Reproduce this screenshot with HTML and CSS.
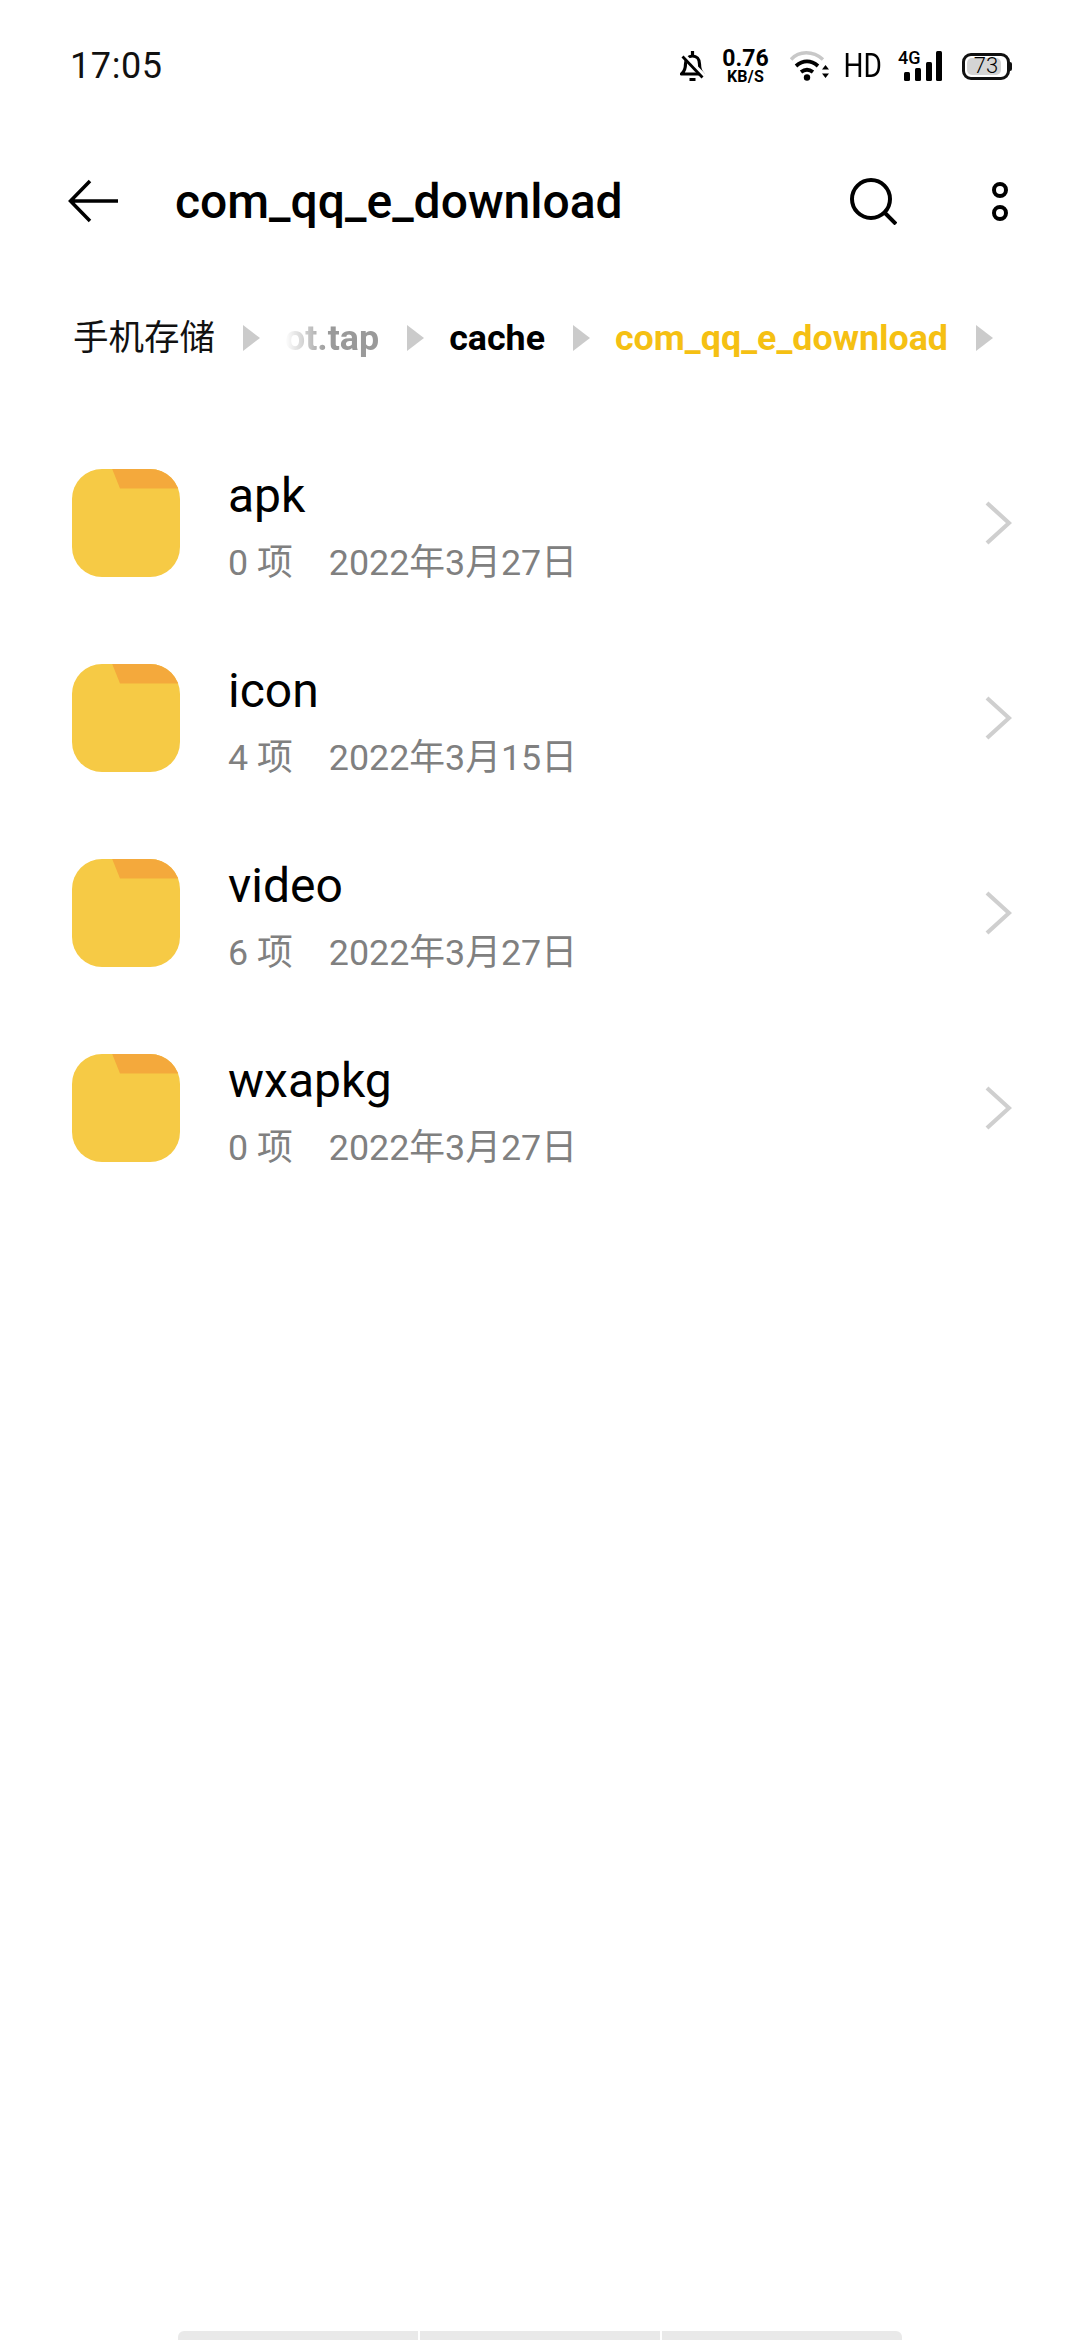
FILE: index.html
```html
<!DOCTYPE html>
<html lang="zh">
<head>
<meta charset="utf-8">
<title>com_qq_e_download</title>
<link rel="stylesheet" href="styles.css">
</head>
<body>
<div class="page">
  <header class="status">
    <span class="time">17:05</span>
    <div class="status-icons">
      <svg class="ic-bell" width="25" height="32" viewBox="0 0 25 32"><path d="M1.500 24h21.500C20 21 19.500 18 19.500 14c0-5-3-8-7-8s-7 3-7 8c0 4-.5 7-4 10z" fill="none" stroke="#000" stroke-width="3.200" stroke-linejoin="round"/><path d="M12.500 1v4M9.500 29.500h6" stroke="#000" stroke-width="3.200"/><path d="M3 5l21 21" stroke="#fff" stroke-width="5"/><path d="M2.500 6.500l20 21" stroke="#000" stroke-width="2.800"/></svg>
      <div class="speed"><span class="speed-num">0.76</span><span class="speed-unit">KB/S</span></div>
      <svg class="ic-wifi" width="40" height="30" viewBox="0 0 40 30"><path d="M1 8.500C9-.5 23-.5 33 8.500" fill="none" stroke="#c8c8c8" stroke-width="3.500"/><path d="M6 15c7-6 15-6 22 0M11 21c4-3 8-3 12 0" fill="none" stroke="#000" stroke-width="3.800"/><circle cx="17" cy="26.500" r="3.200" fill="#000"/><path d="M32 18.500l3.500-4.500 3.500 4.500zM32 22.500l3.500 4.500 3.500-4.500z" fill="#000"/></svg>
      <span class="hd"><span class="hd-text">HD</span></span>
      <div class="net">
        <span class="net-label">4G</span>
        <svg width="38" height="30" viewBox="0 0 38 30"><rect x="0" y="21" width="6" height="9" rx="1.500"/><rect x="11" y="17" width="6" height="13" rx="1.500"/><rect x="22" y="11" width="6" height="19" rx="1.500"/><rect x="32" y="0" width="6" height="30" rx="1.500"/></svg>
      </div>
      <div class="battery"><div class="battery-body"><span class="battery-fill"></span><span class="battery-num">73</span></div><span class="battery-cap"></span></div>
    </div>
  </header>

  <nav class="toolbar">
    <svg class="back" width="52" height="44" viewBox="0 0 52 44"><path d="M50 22H3M22 2L2.500 22 22 42" fill="none" stroke="#000" stroke-width="3.500"/></svg>
    <h1 class="title">com_qq_e_download</h1>
    <svg class="search" width="47" height="47" viewBox="0 0 47 47"><circle cx="21" cy="21" r="19" fill="none" stroke="#000" stroke-width="4"/><path d="M34 34l12 12" stroke="#000" stroke-width="4"/></svg>
    <svg class="more" width="16" height="39" viewBox="0 0 16 39"><circle cx="8" cy="8" r="6" fill="none" stroke="#000" stroke-width="4"/><circle cx="8" cy="31" r="6" fill="none" stroke="#000" stroke-width="4"/></svg>
  </nav>

  <div class="crumbs">
    <span class="crumb cjk">手机存储</span><span class="sep"></span>
    <span class="crumb faded">ot.tap</span><span class="sep"></span>
    <span class="crumb">cache</span><span class="sep"></span>
    <span class="crumb current">com_qq_e_download</span><span class="sep"></span>
  </div>

  <ul class="list">
    <li class="row">
      <span class="folder"><span class="tab"></span></span>
      <div class="info"><div class="name">apk</div><div class="meta"><span>0 项</span><span>2022年3月27日</span></div></div>
      <svg class="chev" width="28" height="46" viewBox="0 0 28 46"><path d="M3 3l22 20L3 43" fill="none" stroke="#cfcfcf" stroke-width="4.200"/></svg>
    </li>
    <li class="row">
      <span class="folder"><span class="tab"></span></span>
      <div class="info"><div class="name">icon</div><div class="meta"><span>4 项</span><span>2022年3月15日</span></div></div>
      <svg class="chev" width="28" height="46" viewBox="0 0 28 46"><path d="M3 3l22 20L3 43" fill="none" stroke="#cfcfcf" stroke-width="4.200"/></svg>
    </li>
    <li class="row">
      <span class="folder"><span class="tab"></span></span>
      <div class="info"><div class="name">video</div><div class="meta"><span>6 项</span><span>2022年3月27日</span></div></div>
      <svg class="chev" width="28" height="46" viewBox="0 0 28 46"><path d="M3 3l22 20L3 43" fill="none" stroke="#cfcfcf" stroke-width="4.200"/></svg>
    </li>
    <li class="row">
      <span class="folder"><span class="tab"></span></span>
      <div class="info"><div class="name">wxapkg</div><div class="meta"><span>0 项</span><span>2022年3月27日</span></div></div>
      <svg class="chev" width="28" height="46" viewBox="0 0 28 46"><path d="M3 3l22 20L3 43" fill="none" stroke="#cfcfcf" stroke-width="4.200"/></svg>
    </li>
  </ul>

  <div class="nav-hint"><span></span><span></span><span></span></div>
</div>
</body>
</html>
```
FILE: styles.css
```css
* { box-sizing: border-box; }
html, body { margin: 0; padding: 0; background: #fff; }
body { font-family: Roboto, "Noto Sans CJK SC", sans-serif; color: #000; }
.page { width: 1080px; height: 2340px; display: flex; flex-direction: column; overflow: hidden; background: #fff; }

.status { height: 130px; padding: 2px 68px 0 70px; display: flex; justify-content: space-between; align-items: center; }
.time { font-size: 36px; letter-spacing: .6px; color: #111; }
.status-icons { display: flex; align-items: center; }
.ic-bell { margin-right: 17px; }
.speed { display: flex; flex-direction: column; align-items: center; width: 47px; margin-right: 21px; font-weight: 700; line-height: 1; }
.speed-num { font-size: 23px; line-height: 20px; }
.speed-unit { font-size: 16px; line-height: 15px; letter-spacing: .2px; }
.ic-wifi { margin-right: 15px; }
.hd { width: 35px; margin-right: 24px; display: flex; justify-content: center; }
.hd-text { flex: none; font-size: 33px; line-height: 34px; transform: scaleX(.85); }
.net { position: relative; width: 38px; margin-right: 20px; }
.net-label { position: absolute; left: -6px; top: -2px; font-size: 18px; line-height: 18px; font-weight: 500; }
.net svg { display: block; fill: #000; }
.battery { display: flex; align-items: center; }
.battery-body { position: relative; width: 48px; height: 27px; border: 3px solid #111; border-radius: 9px; display: flex; align-items: center; justify-content: center; }
.battery-fill { position: absolute; left: 2px; top: 2px; bottom: 2px; width: 34px; background: #d4d4d4; border-radius: 5px; }
.battery-num { position: relative; font-size: 22px; font-weight: 300; line-height: 1; }
.battery-cap { width: 2px; height: 9px; background: #111; border-radius: 0 2px 2px 0; }

.toolbar { height: 68px; margin-top: 37px; display: flex; align-items: center; padding: 0 72px 0 68px; }
.back { flex: none; margin-right: 55px; }
.title { flex: 1; margin: 0; font-size: 48px; font-weight: 500; white-space: nowrap; }
.search { margin-right: 95px; }

.crumbs { display: flex; align-items: center; height: 60px; margin-top: 73px; padding-left: 73px; white-space: nowrap; font-size: 35.8px; font-weight: 700; }
.crumb { line-height: 60px; }
.cjk { font-weight: 400; font-size: 35.5px; color: #111; }
.faded { color: #9a9a9a; -webkit-mask-image: linear-gradient(90deg, transparent, #000 45%); mask-image: linear-gradient(90deg, transparent, #000 45%); }
.current { color: #f5c013; }
.sep { width: 0; height: 0; margin: 0 25px 0 28px; border-left: 17px solid #cbcbcb; border-top: 13px solid transparent; border-bottom: 13px solid transparent; }

.list { list-style: none; margin: 57px 0 0; padding: 0; }
.row { height: 195px; display: flex; align-items: center; padding: 0 68px 0 72px; }
.folder { flex: none; position: relative; width: 108px; height: 108px; background: #f6ca45; border-radius: 30px; overflow: hidden; }
.tab { position: absolute; right: 0; top: 0; width: 68px; height: 20px; background: #f4a93c; clip-path: polygon(0 0, 100% 0, 100% 100%, 8px 100%); }
.info { flex: 1; margin-left: 48px; padding-top: 10px; }
.name { font-size: 48px; line-height: 58px; }
.meta { font-size: 35.8px; line-height: 50px; color: #808080; display: flex; gap: 36px; margin-top: 13px; }

.nav-hint { margin-top: auto; align-self: center; width: 724px; height: 9px; display: flex; gap: 2px; }
.nav-hint span { flex: 1; background: #e9e9e9; }
.nav-hint span:first-child { border-top-left-radius: 6px; }
.nav-hint span:last-child { border-top-right-radius: 6px; }
```
